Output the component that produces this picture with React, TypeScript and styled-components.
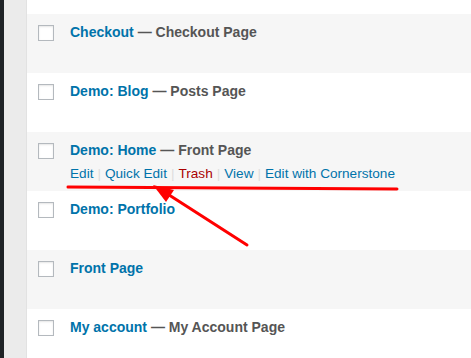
import React from "react";
import styled, { createGlobalStyle } from "styled-components";

const Global = createGlobalStyle`
  html, body {
    margin: 0;
    padding: 0;
    background: #fff;
    font-family: "Liberation Sans", Arial, sans-serif;
    -webkit-font-smoothing: antialiased;
  }
`;

const Page = styled.div`
  position: relative;
  display: flex;
  width: 471px;
  height: 358px;
  overflow: hidden;
`;

const AdminBar = styled.div`
  width: 4px;
  background: #1f2326;
`;

const Gutter = styled.div`
  width: 22px;
  background: #ebebeb;
  border-right: 1px solid #e2e2e2;
`;

const Table = styled.div`
  flex: 1;
  display: flex;
  flex-direction: column;
  background: #fff;
`;

const TopGap = styled.div`
  height: 14px;
  flex-shrink: 0;
`;

const Row = styled.div<{ $alt?: boolean }>`
  display: flex;
  height: 59px;
  flex-shrink: 0;
  background: ${(p) => (p.$alt ? "#f6f6f6" : "#fff")};
`;

const CheckCell = styled.div`
  padding: 11px 0 0 11px;
`;

const Checkbox = styled.span`
  display: block;
  width: 14px;
  height: 14px;
  border: 1px solid #b4b9be;
  background: #fff;
  box-shadow: inset 0 1px 2px rgba(0, 0, 0, 0.1);
`;

const TitleCell = styled.div`
  padding: 8px 0 0 16px;
`;

const Title = styled.div`
  font-size: 14px;
  line-height: 20px;
  font-weight: bold;
  color: #555;
  white-space: nowrap;
`;

const TitleLink = styled.span`
  color: #0073aa;
`;

const Actions = styled.div`
  padding-top: 4px;
  font-size: 13.6px;
  line-height: 19.5px;
  white-space: nowrap;
  color: #ddd;
`;

const Action = styled.span<{ $danger?: boolean }>`
  color: ${(p) => (p.$danger ? "#a00" : "#0073aa")};
`;

const Sep = styled.span`
  margin: 0 4px;
`;

const Overlay = styled.svg`
  position: absolute;
  left: 0;
  top: 0;
  pointer-events: none;
`;

const rows: { title: string; state?: string; actions?: boolean }[] = [
  { title: "Checkout", state: "Checkout Page" },
  { title: "Demo: Blog", state: "Posts Page" },
  { title: "Demo: Home", state: "Front Page", actions: true },
  { title: "Demo: Portfolio" },
  { title: "Front Page" },
  { title: "My account", state: "My Account Page" },
];

const actionList = ["Edit", "Quick Edit", "Trash", "View", "Edit with Cornerstone"];

export default function App() {
  return (
    <Page>
      <Global />
      <AdminBar />
      <Gutter />
      <Table>
        <TopGap />
        {rows.map((r, i) => (
          <Row key={r.title} $alt={i % 2 === 0}>
            <CheckCell>
              <Checkbox />
            </CheckCell>
            <TitleCell>
              <Title>
                <TitleLink>{r.title}</TitleLink>
                {r.state && <> — {r.state}</>}
              </Title>
              {r.actions && (
                <Actions>
                  {actionList.map((a, j) => (
                    <React.Fragment key={a}>
                      {j > 0 && <Sep>|</Sep>}
                      <Action $danger={a === "Trash"}>{a}</Action>
                    </React.Fragment>
                  ))}
                </Actions>
              )}
            </TitleCell>
          </Row>
        ))}
      </Table>
      <Overlay width="471" height="358" viewBox="0 0 471 358">
        <path d="M68 187 L397 189" stroke="#f00" strokeWidth="3" strokeLinecap="round" fill="none" />
        <path d="M247 245 L166 193" stroke="#f00" strokeWidth="3" strokeLinecap="round" fill="none" />
        <polygon points="153,185 174,190 166,202" fill="#f00" />
      </Overlay>
    </Page>
  );
}
